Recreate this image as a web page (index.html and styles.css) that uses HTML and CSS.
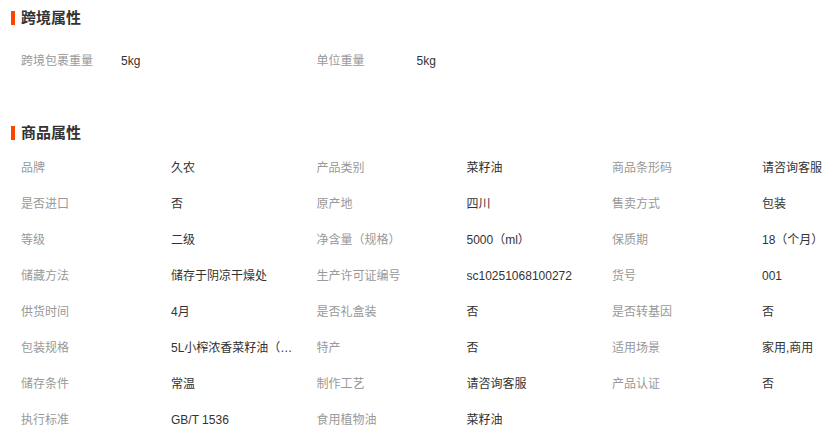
FILE: index.html
```html
<!DOCTYPE html>
<html>
  <head>
    <meta charset="utf-8">
    <meta name="viewport" content="width=device-width, initial-scale=1">
    <title>商品属性</title>
    <link rel="stylesheet" href="styles.css">
  </head>
  <body>

    <div class="attr-box">
      <h3 class="attr-title">跨境属性</h3>
      <ul class="attr-list cross">
	<li><span class="name">跨境包裹重量</span><span class="val">5kg</span></li>
	<li><span class="name">单位重量</span><span class="val">5kg</span></li>
      </ul>
    </div>

    <div class="attr-box goods-box">
      <h3 class="attr-title">商品属性</h3>
      <ul class="attr-list goods">
	<li><span class="name">品牌</span><span class="val">久农</span></li>
	<li><span class="name">产品类别</span><span class="val">菜籽油</span></li>
	<li><span class="name">商品条形码</span><span class="val">请咨询客服</span></li>
	<li><span class="name">是否进口</span><span class="val">否</span></li>
	<li><span class="name">原产地</span><span class="val">四川</span></li>
	<li><span class="name">售卖方式</span><span class="val">包装</span></li>
	<li><span class="name">等级</span><span class="val">二级</span></li>
	<li><span class="name">净含量（规格）</span><span class="val">5000（ml）</span></li>
	<li><span class="name">保质期</span><span class="val">18（个月）</span></li>
	<li><span class="name">储藏方法</span><span class="val">储存于阴凉干燥处</span></li>
	<li><span class="name">生产许可证编号</span><span class="val">sc10251068100272</span></li>
	<li><span class="name">货号</span><span class="val">001</span></li>
	<li><span class="name">供货时间</span><span class="val">4月</span></li>
	<li><span class="name">是否礼盒装</span><span class="val">否</span></li>
	<li><span class="name">是否转基因</span><span class="val">否</span></li>
	<li><span class="name">包装规格</span><span class="val" title="5L小榨浓香菜籽油（5L装）">5L小榨浓香菜籽油（5L装）</span></li>
	<li><span class="name">特产</span><span class="val">否</span></li>
	<li><span class="name">适用场景</span><span class="val">家用,商用</span></li>
	<li><span class="name">储存条件</span><span class="val">常温</span></li>
	<li><span class="name">制作工艺</span><span class="val">请咨询客服</span></li>
	<li><span class="name">产品认证</span><span class="val">否</span></li>
	<li><span class="name">执行标准</span><span class="val">GB/T 1536</span></li>
	<li><span class="name">食用植物油</span><span class="val">菜籽油</span></li>
      </ul>
    </div>

  </body>
</html>
```

FILE: styles.css
```css
      body {
	  margin: 0;
	  background: #fff;
	  color: #333;
	  font-family: "Liberation Sans", "Noto Sans CJK SC", sans-serif;
	  font-size: 12px;
	  overflow: hidden;
      }

      .attr-box {
	  padding-left: 11px;
      }

      .attr-title {
	  margin: 8px 0 0;
	  height: 20px;
	  line-height: 20px;
	  font-size: 15px;
	  font-weight: bold;
	  color: #333;
	  display: flex;
	  align-items: center;
	  gap: 6px;
      }

      .attr-title::before {
	  content: "";
	  width: 4px;
	  height: 14px;
	  background: #ff4400;
      }

      .attr-list {
	  list-style: none;
	  margin: 0;
	  padding: 0;
	  display: grid;
	  grid-template-columns: 295.5px 295.5px 1fr;
      }

      .attr-list li {
	  display: flex;
	  height: 36px;
	  line-height: 36px;
	  padding-left: 10px;
	  white-space: nowrap;
	  min-width: 0;
      }

      .attr-list .name {
	  color: #999;
	  width: 150px;
	  flex-shrink: 0;
      }

      .attr-list .val {
	  color: #333;
	  max-width: 122px;
	  overflow: hidden;
	  text-overflow: ellipsis;
      }

      .cross {
	  margin-top: 15px;
      }

      .cross .name {
	  width: 100px;
      }

      .goods-box {
	  margin-top: 44px;
      }

      .goods {
	  margin-top: 7px;
      }
```
